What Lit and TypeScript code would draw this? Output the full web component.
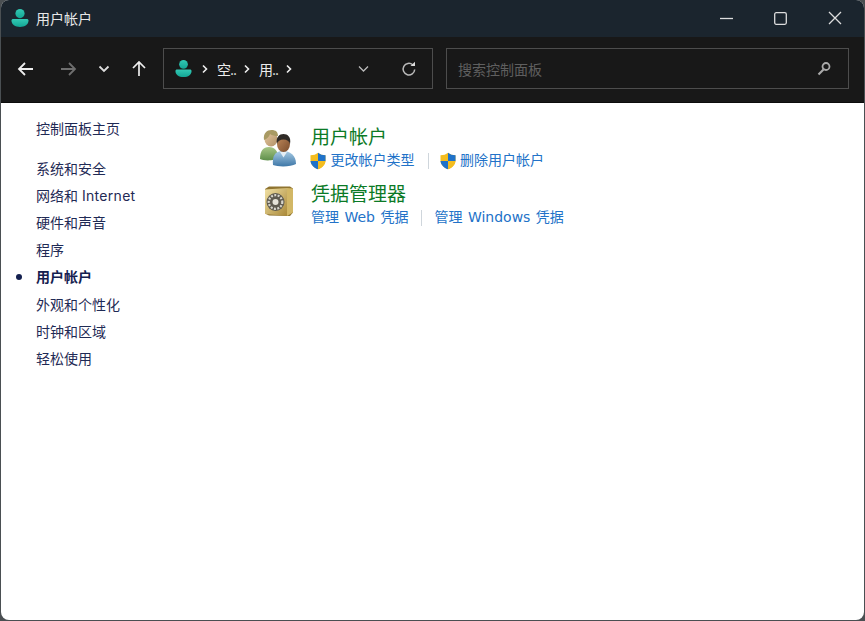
import { LitElement, html, css, svg } from "lit";
import { customElement } from "lit/decorators.js";

const userIcon = (size: number) => svg`
  <svg class="user" width=${size} height=${size} viewBox="0 0 20 20">
    <defs>
      <linearGradient id="teal" x1="0" y1="0" x2="0" y2="1">
        <stop offset="0" stop-color="#33c9b4" />
        <stop offset="1" stop-color="#12a594" />
      </linearGradient>
    </defs>
    <circle cx="10" cy="5.6" r="4.6" fill="url(#teal)" />
    <path d="M1.500 12.600c0-.9.7-1.600 1.600-1.600h13.800c.9 0 1.600.7 1.600 1.600 0 4-3.600 6.400-8.500 6.400s-8.500-2.400-8.500-6.400z" fill="url(#teal)" />
  </svg>`;

const shield = svg`
  <svg class="shield" width="18" height="18" viewBox="0 0 18 18">
    <path d="M9 .8C7 2.500 4.500 3.300 1.500 3.300v5c0 4 3 7.300 7.500 9 4.500-1.700 7.500-5 7.500-9v-5C13.500 3.300 11 2.500 9 .8z" fill="#f4bd1f" />
    <path d="M9 .8v8.200h7.500V3.300C13.500 3.300 11 2.500 9 .8z" fill="#1f72c9" />
    <path d="M9 9H1.500c.3 3.700 3.200 6.800 7.500 8.300z" fill="#1f72c9" />
    <path d="M9 9v8.300c4.300-1.500 7.200-4.600 7.500-8.300z" fill="#f4bd1f" />
  </svg>`;

const usersIcon = svg`
  <svg width="38" height="38" viewBox="0 0 38 38">
    <defs>
      <linearGradient id="skinA" x1="0" y1="0" x2="1" y2="1">
        <stop offset="0" stop-color="#e6c9a0" />
        <stop offset="1" stop-color="#b08f66" />
      </linearGradient>
      <linearGradient id="skinB" x1="0" y1="0" x2="1" y2="1">
        <stop offset="0" stop-color="#c08a5c" />
        <stop offset="1" stop-color="#7a4c2c" />
      </linearGradient>
      <linearGradient id="shirtA" x1="0" y1="0" x2="0" y2="1">
        <stop offset="0" stop-color="#a8c686" />
        <stop offset="1" stop-color="#5e8f4a" />
      </linearGradient>
      <linearGradient id="shirtB" x1="0" y1="0" x2="0" y2="1">
        <stop offset="0" stop-color="#a8cbe4" />
        <stop offset="1" stop-color="#3f78a8" />
      </linearGradient>
    </defs>
    <path d="M0 30c0-8 3-12 9-12s9 4 9 11c-3 3-15 3-18 1z" fill="url(#shirtA)" />
    <ellipse cx="11" cy="10" rx="6.500" ry="7.500" fill="url(#skinA)" />
    <path d="M4 11C3 4 7 1 11.500 1S18 3 18 7c-3 0-6-.5-8-2-.5 2.500-3 5-6 6z" fill="#a99a63" />
    <path d="M13 36c-1-9 2-14 9.500-14S36 26 36 35c-5 3-18 3-23 1z" fill="url(#shirtB)" />
    <path d="M20 23l3.500 5.500L27 23z" fill="#e4eef5" />
    <ellipse cx="23.500" cy="15" rx="6.500" ry="8" fill="url(#skinB)" />
    <path d="M17 15c-1.500-7 2.500-10 6.500-10s8 3 6.500 10c-.8-3-3-4.500-6.500-4.500S17.800 12 17 15z" fill="#2f2a26" />
  </svg>`;

const safeIcon = svg`
  <svg width="32" height="34" viewBox="0 0 32 34">
    <defs>
      <linearGradient id="gold" x1="0" y1="0" x2="1" y2="1">
        <stop offset="0" stop-color="#f2e2a6" />
        <stop offset="1" stop-color="#a98838" />
      </linearGradient>
    </defs>
    <path d="M2 5l4-2.500h21l3 2v24l-3 3.500-21-.5-4-2z" fill="#8f7430" />
    <path d="M2 5.500l22-1.500v28L2 30z" fill="url(#gold)" />
    <path d="M24 4l6 .5v24L24 32z" fill="#d2b766" />
    <circle cx="12.500" cy="18" r="9" fill="#5f5b50" />
    <circle cx="12.500" cy="18" r="6.800" fill="none" stroke="#d8d6cc" stroke-width="2.200" stroke-dasharray="2 1.400" />
    <circle cx="12.500" cy="18" r="3" fill="#e6e3d8" />
  </svg>`;

@customElement("app-root")
export class AppRoot extends LitElement {
  static styles = css`
    :host {
      display: block;
      height: 621px;
      background: #4a4f52;
      font-family: Inter, "Noto Sans CJK SC", sans-serif;
      overflow: hidden;
    }
    .window {
      height: 620px;
      margin: 0 1px;
      display: flex;
      flex-direction: column;
      border-radius: 8px;
      overflow: hidden;
      background: #fff;
    }
    .titlebar {
      height: 37px;
      flex: none;
      box-sizing: border-box;
      background: #1b252e;
      display: flex;
      align-items: center;
      color: #e8e8e8;
      font-size: 14px;
      padding: 0 0 1px 9px;
    }
    .titlebar .user {
      margin-right: 6px;
    }
    .controls {
      margin-left: auto;
      display: flex;
      align-items: center;
      gap: 41px;
      padding-right: 22px;
    }
    .toolbar {
      height: 66px;
      flex: none;
      box-sizing: border-box;
      background: #181818;
      border-bottom: 1px solid #0c0c0c;
      display: flex;
      align-items: center;
      padding: 0 16px 4px;
    }
    .nav {
      display: flex;
      align-items: center;
      gap: 21px;
      width: 146px;
      flex: none;
      margin-top: 2px;
    }
    .nav .forward {
      margin-left: 3px;
    }
    .box {
      height: 41px;
      box-sizing: border-box;
      border: 1px solid #4d4d4d;
      display: flex;
      align-items: center;
      margin-top: 2px;
    }
    .address {
      width: 270px;
      flex: none;
      padding: 0 15px 0 10px;
      color: #ececec;
      font-size: 14px;
      gap: 8px;
    }
    .crumb {
      width: 18px;
      white-space: nowrap;
      letter-spacing: -1px;
    }
    .end {
      margin-left: auto;
      display: flex;
      align-items: center;
      gap: 32px;
    }
    .search {
      width: 403px;
      flex: none;
      margin-left: 13px;
      padding: 0 17px 0 11px;
      color: #5f5f5f;
      font-size: 14px;
      justify-content: space-between;
    }
    .body {
      flex: 1;
      display: flex;
    }
    .side {
      width: 259px;
      flex: none;
      box-sizing: border-box;
      padding: 12px 0 0 35px;
      color: #1f2a55;
      font-size: 14px;
      display: flex;
      flex-direction: column;
    }
    .side div {
      height: 27px;
      line-height: 27px;
      white-space: nowrap;
      position: relative;
    }
    .side .home {
      margin-bottom: 13px;
    }
    .side .latin {
      letter-spacing: 0.3px;
    }
    .side .current {
      font-weight: 700;
      color: #14204f;
      margin-bottom: 1px;
    }
    .side .current::before {
      content: "";
      position: absolute;
      left: -20px;
      top: 11px;
      width: 6px;
      height: 6px;
      border-radius: 50%;
      background: #14204f;
    }
    .main {
      padding-top: 22px;
      display: flex;
      flex-direction: column;
      gap: 11px;
    }
    .group {
      display: flex;
      align-items: flex-start;
    }
    .icon {
      width: 51px;
      flex: none;
      display: flex;
      box-sizing: border-box;
      padding-top: 4px;
    }
    .group.safe .icon {
      padding: 2px 0 0 3px;
    }
    .title {
      color: #0b7a26;
      font-size: 19px;
      line-height: 26px;
      height: 23px;
    }
    .links {
      display: flex;
      align-items: center;
      color: #2272c8;
      font-family: "DejaVu Sans", "Noto Sans CJK SC", sans-serif;
      font-size: 14px;
      word-spacing: 1px;
      height: 23px;
      line-height: 23px;
      margin: 1px 0 -1px;
      white-space: nowrap;
    }
    .item {
      display: flex;
      align-items: center;
      gap: 3.5px;
    }
    .item .shield {
      margin-left: -2px;
    }
    .sep {
      width: 1px;
      height: 16px;
      background: #cfd6dc;
      margin: 0 12px 0 13px;
    }
  `;

  render() {
    const cats = [
      "系统和安全",
      html`网络和 <span class="latin">Internet</span>`,
      "硬件和声音",
      "程序",
    ];
    const rest = ["外观和个性化", "时钟和区域", "轻松使用"];
    const chev = svg`<svg width="8" height="10" viewBox="0 0 8 10"><path d="M2 1.500L5.500 5 2 8.500" fill="none" stroke="#eee" stroke-width="1.600" /></svg>`;
    return html`
      <div class="window">
        <div class="titlebar">
          ${userIcon(20)}
          <span>用户帐户</span>
          <div class="controls">
            <svg width="13" height="13" viewBox="0 0 13 13"><path d="M0 6.500h13" stroke="#ddd" stroke-width="1.300" /></svg>
            <svg width="13" height="13" viewBox="0 0 13 13"><rect x=".7" y=".7" width="11.600" height="11.600" rx="1.500" fill="none" stroke="#ddd" stroke-width="1.300" /></svg>
            <svg width="14" height="14" viewBox="0 0 14 14"><path d="M1 1l12 12M13 1L1 13" stroke="#ddd" stroke-width="1.300" /></svg>
          </div>
        </div>
        <div class="toolbar">
          <div class="nav">
            <svg width="18" height="16" viewBox="0 0 18 16"><path d="M16 8H2M8 2L2 8l6 6" fill="none" stroke="#eee" stroke-width="1.800" /></svg>
            <svg class="forward" width="18" height="16" viewBox="0 0 18 16"><path d="M2 8h14M10 2l6 6-6 6" fill="none" stroke="#6e6e6e" stroke-width="1.800" /></svg>
            <svg width="12" height="10" viewBox="0 0 12 10"><path d="M1.500 2.500L6 7l4.500-4.500" fill="none" stroke="#ddd" stroke-width="1.800" /></svg>
            <svg width="16" height="18" viewBox="0 0 16 18"><path d="M8 16V2M2 8l6-6 6 6" fill="none" stroke="#eee" stroke-width="1.700" /></svg>
          </div>
          <div class="box address">
            ${userIcon(19)}
            ${chev}
            <span class="crumb">空..</span>
            ${chev}
            <span class="crumb">用..</span>
            ${chev}
            <div class="end">
              <svg width="11" height="8" viewBox="0 0 11 8"><path d="M1 1.500l4.500 4.500L10 1.500" fill="none" stroke="#bbb" stroke-width="1.300" /></svg>
              <svg width="16" height="16" viewBox="0 0 16 16"><path d="M13.700 8.500a5.800 5.800 0 1 1-2-4.800" fill="none" stroke="#bbb" stroke-width="1.500" /><path d="M9.500 5h4.500V.8z" fill="#ddd" /></svg>
            </div>
          </div>
          <div class="box search">
            <span>搜索控制面板</span>
            <svg width="14" height="15" viewBox="0 0 14 15"><circle cx="9" cy="5.500" r="3.500" fill="none" stroke="#aaa" stroke-width="1.800" /><path d="M6.500 8.500L1.500 13.500" stroke="#aaa" stroke-width="2.200" /></svg>
          </div>
        </div>
        <div class="body">
          <div class="side">
            <div class="home">控制面板主页</div>
            ${cats.map((c) => html`<div>${c}</div>`)}
            <div class="current">用户帐户</div>
            ${rest.map((c) => html`<div>${c}</div>`)}
          </div>
          <div class="main">
            <div class="group">
              <div class="icon">${usersIcon}</div>
              <div>
                <div class="title">用户帐户</div>
                <div class="links">
                  <span class="item">${shield}更改帐户类型</span>
                  <span class="sep"></span>
                  <span class="item">${shield}删除用户帐户</span>
                </div>
              </div>
            </div>
            <div class="group safe">
              <div class="icon">${safeIcon}</div>
              <div>
                <div class="title">凭据管理器</div>
                <div class="links">
                  <span>管理 Web 凭据</span>
                  <span class="sep"></span>
                  <span>管理 Windows 凭据</span>
                </div>
              </div>
            </div>
          </div>
        </div>
      </div>
    `;
  }
}
